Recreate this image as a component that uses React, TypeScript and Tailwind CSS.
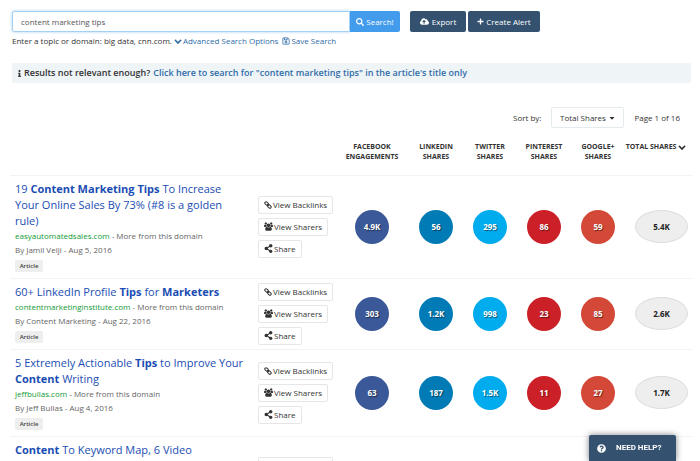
import type { ReactNode } from "react";
import {
  FaCloudUploadAlt,
  FaInfo,
  FaPlus,
  FaCaretDown,
  FaQuestionCircle,
  FaRegSave,
  FaSearch,
  FaShareAlt,
} from "react-icons/fa";

type Result = {
  title: ReactNode;
  domain: string;
  byline: string;
  shares: string[];
  total: string;
};

const results: Result[] = [
  {
    title: (
      <>
        19 <b>Content Marketing Tips</b> To Increase Your Online Sales By 73%
        (#8 is a golden rule)
      </>
    ),
    domain: "easyautomatedsales.com",
    byline: "By Jamil Velji - Aug 5, 2016",
    shares: ["4.9K", "56", "295", "86", "59"],
    total: "5.4K",
  },
  {
    title: (
      <>
        60+ LinkedIn Profile <b>Tips</b> for <b>Marketers</b>
      </>
    ),
    domain: "contentmarketinginstitute.com",
    byline: "By Content Marketing - Aug 22, 2016",
    shares: ["303", "1.2K", "998", "23", "85"],
    total: "2.6K",
  },
  {
    title: (
      <>
        5 Extremely Actionable <b>Tips</b> to Improve Your <b>Content</b>{" "}
        Writing
      </>
    ),
    domain: "jeffbullas.com",
    byline: "By Jeff Bullas - Aug 4, 2016",
    shares: ["63", "187", "1.5K", "11", "27"],
    total: "1.7K",
  },
];

const circleColors = [
  "bg-[#3b5998]",
  "bg-[#007bb6]",
  "bg-[#00aced]",
  "bg-[#cb2027]",
  "bg-[#d34836]",
];

const columns = [
  ["FACEBOOK", "ENGAGEMENTS"],
  ["LINKEDIN", "SHARES"],
  ["TWITTER", "SHARES"],
  ["PINTEREST", "SHARES"],
  ["GOOGLE+", "SHARES"],
];

const ChainIcon = () => (
  <svg
    viewBox="0 0 16 16"
    className="size-2"
    fill="none"
    stroke="currentColor"
    strokeWidth="2"
    aria-hidden="true"
  >
    <rect x="1.2" y="2.6" width="8" height="5" rx="2.5" transform="rotate(45 5.2 5.1)" />
    <rect x="6.8" y="8.4" width="8" height="5" rx="2.5" transform="rotate(45 10.8 10.9)" />
    <path d="M6.2 6.2l3.6 3.6" />
  </svg>
);

const ChevronIcon = () => (
  <svg viewBox="0 0 1792 1792" className="inline size-2" fill="currentColor" aria-hidden="true">
    <path d="M1683 808l-742 741q-19 19-45 19t-45-19l-742-741q-19-19-19-45.5t19-45.5l166-165q19-19 45-19t45 19l531 531 531-531q19-19 45-19t45 19l166 165q19 19 19 45.5t-19 45.5z" />
  </svg>
);

const UsersIcon = () => (
  <svg viewBox="0 0 1920 1792" className="size-[9px]" fill="currentColor" aria-hidden="true">
    <path d="M593 896q-162 5-265 128h-134q-82 0-138-40.5t-56-118.5q0-353 124-353 6 0 43.5 21t97.5 42.5 119 21.5q67 0 133-23-5 37-5 66 0 139 81 256zm1071 637q0 120-73 189.5t-194 69.5h-874q-121 0-194-69.5t-73-189.5q0-53 3.5-103.5t14-109 26.5-108.5 43-97.5 62-81 85.5-53.5 111.5-20q10 0 43 21.5t73 48 107 48 135 21.5 135-21.5 107-48 73-48 43-21.5q61 0 111.5 20t85.5 53.5 62 81 43 97.5 26.5 108.5 14 109 3.5 103.5zm-1024-1277q0 106-75 181t-181 75-181-75-75-181 75-181 181-75 181 75 75 181zm704 384q0 159-112.5 271.5t-271.5 112.5-271.5-112.5-112.5-271.5 112.5-271.5 271.5-112.5 271.5 112.5 112.5 271.5zm576 225q0 78-56 118.5t-138 40.5h-134q-103-123-265-128 81-117 81-256 0-29-5-66 66 23 133 23 59 0 119-21.5t97.5-42.5 43.5-21q124 0 124 353zm-128-609q0 106-75 181t-181 75-181-75-75-181 75-181 181-75 181 75 75 181z" />
  </svg>
);

const ActionButton = ({ icon, children }: { icon: ReactNode; children: string }) => (
  <button className="flex h-[18px] items-center gap-px whitespace-nowrap rounded-xs border border-[#e6e6e6] bg-white px-[5px] text-[8px] text-[#333]">
    {icon}
    {children}
  </button>
);

const Actions = () => (
  <div className="flex flex-col items-start gap-1">
    <ActionButton icon={<ChainIcon />}>View Backlinks</ActionButton>
    <ActionButton icon={<UsersIcon />}>View Sharers</ActionButton>
    <ActionButton icon={<FaShareAlt className="size-[9px]" />}>Share</ActionButton>
  </div>
);

const Title = ({ children }: { children: ReactNode }) => (
  <a href="#" className="block text-[11px] leading-4 text-[#1a4db3]">
    {children}
  </a>
);

const ResultRow = ({ result }: { result: Result }) => (
  <tr className="border-t border-[#f3f3f3]">
    <td className="pt-[5px] pr-3 pb-1.5 pl-[5px] align-top">
      <Title>{result.title}</Title>
      <p className="whitespace-nowrap text-[8px] leading-[14px] text-[#666]">
        <a href="#" className="text-[#129a36]">
          {result.domain}
        </a>{" "}
        - <a href="#">More from this domain</a>
      </p>
      <p className="text-[8px] leading-[14px] text-[#666]">{result.byline}</p>
      <span className="mt-[3px] block w-7 rounded-xs bg-[#eee] text-center text-[6px] leading-3 font-semibold text-[#444]">
        Article
      </span>
    </td>
    <td>
      <Actions />
    </td>
    {result.shares.map((count, i) => (
      <td key={i}>
        <div
          className={`mx-auto flex size-[34px] items-center justify-center rounded-full text-[8px] font-bold text-white text-shadow-[1px_1px_1px_rgb(0_0_0/0.5)] ${circleColors[i]}`}
        >
          {count}
        </div>
      </td>
    ))}
    <td>
      <div className="ml-auto mr-[5px] flex h-[33px] w-[53px] items-center justify-center rounded-[50%] border border-[#ddd] bg-[#eee] text-[8px] font-bold text-[#222]">
        {result.total}
      </div>
    </td>
  </tr>
);

const SearchBar = () => (
  <form className="flex" onSubmit={(e) => e.preventDefault()}>
    <input
      type="text"
      aria-label="Topic or domain"
      defaultValue="content marketing tips"
      className="h-[21px] w-[338px] rounded-l-xs border border-[#a3d0f5] px-2 text-[8px] text-[#555] shadow-[0_0_3px_rgb(102_175_233/0.6)] outline-none"
    />
    <button className="flex h-[21px] w-[50px] items-center justify-center gap-0.5 rounded-r-xs bg-[#439beb] text-[8px] text-white">
      <FaSearch className="size-2" />
      Search!
    </button>
    <button
      type="button"
      className="ml-2.5 flex h-[21px] w-14 items-center justify-center gap-[3px] rounded-xs bg-[#34526f] text-[8px] text-white"
    >
      <FaCloudUploadAlt className="size-[9px]" />
      Export
    </button>
    <button
      type="button"
      className="ml-0.5 flex h-[21px] w-[72px] items-center justify-center gap-0.5 rounded-xs bg-[#34526f] text-[8px] text-white"
    >
      <FaPlus className="size-[7px]" />
      Create Alert
    </button>
  </form>
);

const App = () => {
  return (
    <div className="h-screen overflow-hidden bg-white pt-[11px] pr-[9px] pl-3 font-['Open_Sans',sans-serif] text-[#333]">
      <SearchBar />
      <div className="mt-[3px] flex items-center text-[8px] leading-3">
        <span>Enter a topic or domain: big data, cnn.com.</span>
        <a href="#" className="ml-0.5 flex items-center gap-px text-[#2f6da8]">
          <ChevronIcon />
          Advanced Search Options
        </a>
        <a href="#" className="ml-1 flex items-center gap-px text-[#2f6da8]">
          <FaRegSave className="size-2" />
          Save Search
        </a>
      </div>

      <div className="mt-4 flex h-5 items-center rounded-xs bg-[#eff4f7] px-1 text-[9px] font-semibold">
        <FaInfo className="mr-px size-[7px]" />
        <span>Results not relevant enough?</span>
        <a href="#" className="ml-[3px] text-[#2f6da8]">
          Click here to search for "content marketing tips" in the article's title only
        </a>
      </div>

      <div className="mt-6 flex items-center justify-end pr-[11px] text-[8px]">
        <span>Sort by:</span>
        <button className="mx-2.5 flex h-[21px] w-[73px] items-center justify-center gap-0.5 rounded-xs border border-[#e3ebef]">
          Total Shares
          <FaCaretDown className="size-2" />
        </button>
        <span>Page 1 of 16</span>
      </div>

      <div className="-mx-0.5 mt-3.5">
        <table className="w-full table-fixed">
          <colgroup>
            <col />
            <col className="w-[77px]" />
            <col className="w-[74px]" />
            <col className="w-[54px]" />
            <col className="w-[54px]" />
            <col className="w-[54px]" />
            <col className="w-[54px]" />
            <col className="w-[68px]" />
          </colgroup>
          <thead>
            <tr className="h-[33px] align-top text-[7px] leading-[10px] font-bold">
              <td />
              <td />
              {columns.map(([network, unit]) => (
                <th key={network} scope="col">
                  {network}
                  <br />
                  {unit}
                </th>
              ))}
              <th scope="col" className="whitespace-nowrap pr-1.5">
                TOTAL SHARES <ChevronIcon />
              </th>
            </tr>
          </thead>
          <tbody>
            {results.map((result) => (
              <ResultRow key={result.domain} result={result} />
            ))}
            <tr className="h-[104px] border-t border-[#f3f3f3]">
              <td className="pt-[5px] pl-[5px] align-top">
                <Title>
                  <b>Content</b> To Keyword Map, 6 Video
                </Title>
              </td>
              <td>
                <Actions />
              </td>
              <td colSpan={6} />
            </tr>
          </tbody>
        </table>
      </div>

      <button className="fixed right-6 bottom-0 flex h-[26px] w-[87px] items-center gap-2.5 rounded-t-xs bg-[#34526f] pl-2 font-[Roboto,sans-serif] text-[8px] font-bold text-white shadow-[0_0_6px_rgb(0_0_0/0.5)]">
        <FaQuestionCircle className="size-[9px]" />
        NEED HELP?
      </button>
    </div>
  );
};

export default App;
